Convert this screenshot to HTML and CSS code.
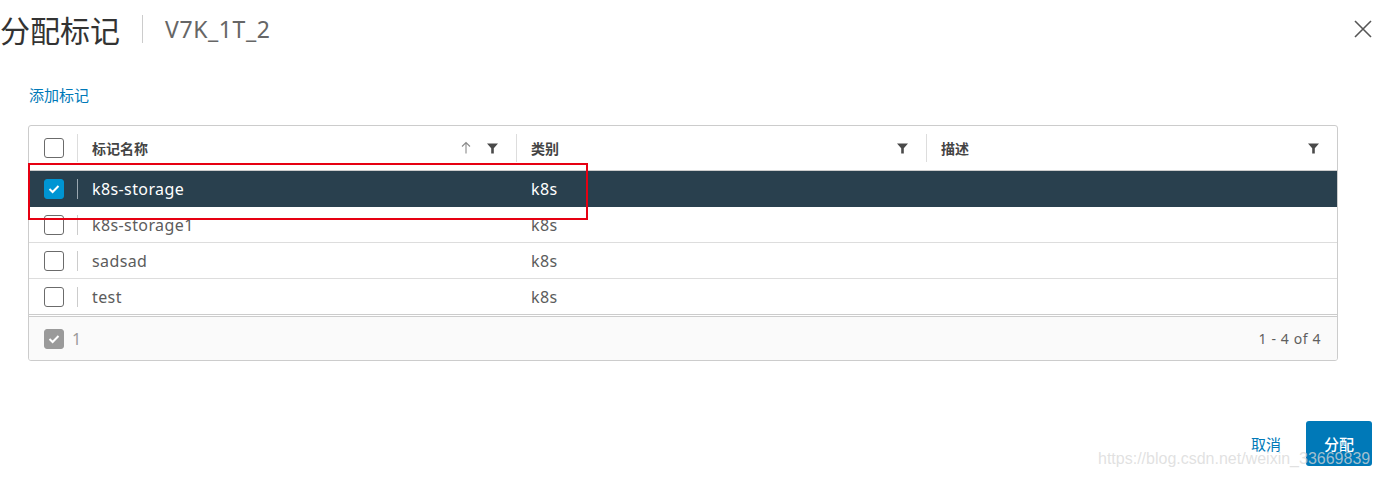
FILE: index.html
```html
<!DOCTYPE html>
<html lang="zh">
<head>
<meta charset="utf-8">
<title>分配标记</title>
<link rel="stylesheet" href="styles.css">
</head>
<body>
<div class="dialog">
  <div class="dlg-header">
    <h1 class="title">分配标记</h1>
    <span class="hdr-divider"></span>
    <span class="subtitle">V7K_1T_2</span>
    <button class="close" aria-label="关闭">
      <svg width="18" height="18" viewBox="0 0 18 18"><path d="M1 1 L17 17 M17 1 L1 17" stroke="#565656" stroke-width="1.6" fill="none"/></svg>
    </button>
  </div>

  <a class="add-link">添加标记</a>

  <div class="grid-wrap">
    <div class="grid">
      <div class="row head">
        <div class="cell cb-cell"><span class="cb"></span></div>
        <div class="cell sep"><span class="htext">标记名称</span>
          <span class="hicons">
            <svg class="sort" width="10" height="13" viewBox="0 0 10 13"><path d="M5 1.5 V12.5 M1 5.5 L5 1.5 L9 5.5" stroke="#8a8a8a" stroke-width="1.1" fill="none"/></svg>
            <svg class="filter" width="11" height="11" viewBox="0 0 11 11"><path d="M0 0.5 H11 L6.8 5.2 V10.5 H4.2 V5.2 Z" fill="#4a4a4a"/></svg>
          </span>
        </div>
        <div class="cell sep"><span class="htext">类别</span>
          <span class="hicons"><svg class="filter" width="11" height="11" viewBox="0 0 11 11"><path d="M0 0.5 H11 L6.8 5.2 V10.5 H4.2 V5.2 Z" fill="#4a4a4a"/></svg></span>
        </div>
        <div class="cell sep"><span class="htext">描述</span>
          <span class="hicons"><svg class="filter" width="11" height="11" viewBox="0 0 11 11"><path d="M0 0.5 H11 L6.8 5.2 V10.5 H4.2 V5.2 Z" fill="#4a4a4a"/></svg></span>
        </div>
      </div>

      <div class="row data selected">
        <div class="cell cb-cell"><span class="cb checked"><svg width="12" height="10" viewBox="0 0 12 10"><path d="M1.5 5 L4.6 8 L10.5 2" stroke="#fff" stroke-width="2" fill="none"/></svg></span></div>
        <div class="cell sep-row">k8s-storage</div>
        <div class="cell">k8s</div>
        <div class="cell"></div>
      </div>
      <div class="row data">
        <div class="cell cb-cell"><span class="cb"></span></div>
        <div class="cell sep-row">k8s-storage1</div>
        <div class="cell">k8s</div>
        <div class="cell"></div>
      </div>
      <div class="row data">
        <div class="cell cb-cell"><span class="cb"></span></div>
        <div class="cell sep-row">sadsad</div>
        <div class="cell">k8s</div>
        <div class="cell"></div>
      </div>
      <div class="row data last">
        <div class="cell cb-cell"><span class="cb"></span></div>
        <div class="cell sep-row">test</div>
        <div class="cell">k8s</div>
        <div class="cell"></div>
      </div>

      <div class="grid-footer">
        <span class="cb gray"><svg width="12" height="10" viewBox="0 0 12 10"><path d="M1.5 5 L4.6 8 L10.5 2" stroke="#fff" stroke-width="2" fill="none"/></svg></span>
        <span class="sel-count">1</span>
        <span class="pager">1 - 4 of 4</span>
      </div>
    </div>
    <div class="highlight"></div>
  </div>

  <div class="actions">
    <a class="cancel">取消</a>
    <button class="primary">分配</button>
  </div>
  <div class="watermark">https://blog.csdn.net/weixin_33669839</div>
</div>
</body>
</html>
```

FILE: styles.css
```css
* { box-sizing: border-box; }
html, body { margin: 0; padding: 0; background: #fff; }
body { font-family: "Noto Sans", "Noto Sans CJK SC", sans-serif; color: #565656; }

.dialog { position: relative; width: 1379px; height: 479px; overflow: hidden; }

.dlg-header { display: flex; align-items: center; height: 58px; padding-right: 7px; }
.title { margin: 0; font-size: 30px; font-weight: 400; color: #333; line-height: 1; font-family: "Noto Sans CJK SC", sans-serif; }
.hdr-divider { width: 1px; height: 28px; background: #ccc; margin-left: 22px; }
.subtitle { margin-left: 22px; font-size: 23px; letter-spacing: 0.6px; color: #666; line-height: 1; }
.close { margin-left: auto; border: 0; background: none; padding: 0; width: 18px; height: 18px; display: flex; }

.add-link { display: block; margin-top: 28px; padding-left: 29px; font-size: 15px; line-height: 18px; color: #0079b8; font-family: "Noto Sans CJK SC", sans-serif; }

.grid-wrap { position: relative; margin-top: 21px; margin-left: 28px; width: 1310px; }
.grid { border: 1px solid #ccc; border-radius: 3px; overflow: hidden; }

.row { display: grid; grid-template-columns: 48px 439px 410px 1fr; }
.row.head { height: 45px; border-bottom: 1px solid #ccc; }
.row.data { height: 36px; border-bottom: 1px solid #ddd; font-size: 16px; letter-spacing: 0.4px; color: #5c5c5c; }
.row.data.last { border-bottom: 3px double #ccc; height: 38px; }
.row.selected { background: #29404e; color: #fff; border-bottom-color: #29404e; }

.cell { display: flex; align-items: center; padding-left: 15px; position: relative; }
.cb-cell { padding-left: 15px; }
.row.head .cell { font-size: 14px; font-weight: 700; color: #444; letter-spacing: 0; font-family: "Noto Sans CJK SC", sans-serif; }
.row.head .sep::before { content: ""; position: absolute; left: 0; top: 8px; height: 28px; width: 1px; background: #ddd; }
.sep-row::before { content: ""; position: absolute; left: 0; top: 8px; height: 20px; width: 1px; background: #ccc; }
.selected .sep-row::before { background: #9aa8b1; }

.htext { flex: 1; }
.hicons { display: flex; align-items: center; gap: 16px; padding-right: 18px; }
.sort { margin-top: -1px; }

.cb { width: 20px; height: 20px; border: 1px solid #6b6b6b; border-radius: 3px; display: flex; align-items: center; justify-content: center; background: #fff; }
.cb.checked { background: #0095d3; border-color: #0095d3; }
.cb.gray { background: #9a9a9a; border-color: #9a9a9a; }

.grid-footer { display: flex; align-items: center; height: 43px; background: #fafafa; padding-left: 15px; padding-right: 16px; font-size: 13px; color: #666; }
.sel-count { margin-left: 8px; font-size: 16px; color: #9a9a9a; }
.pager { margin-left: auto; font-size: 14px; letter-spacing: 0.6px; color: #5f5f5f; }

.highlight { position: absolute; left: 0; top: 38px; width: 560px; height: 57px; border: 2px solid #e60012; pointer-events: none; }

.actions { display: flex; justify-content: flex-end; align-items: center; gap: 25px; margin-top: 60px; padding-right: 7px; }
.cancel { font-size: 15px; color: #0079b8; font-family: "Noto Sans CJK SC", sans-serif; }
.primary { width: 66px; height: 45px; border: 0; border-radius: 3px; background: #0079b8; color: #fff; font-size: 15px; font-family: "Noto Sans CJK SC", sans-serif; font-weight: 500; }

.watermark { position: absolute; left: 1098px; top: 450px; font-family: "Liberation Sans", Arial, sans-serif; font-size: 16px; color: rgba(215, 215, 215, 0.75); white-space: nowrap; }
```
